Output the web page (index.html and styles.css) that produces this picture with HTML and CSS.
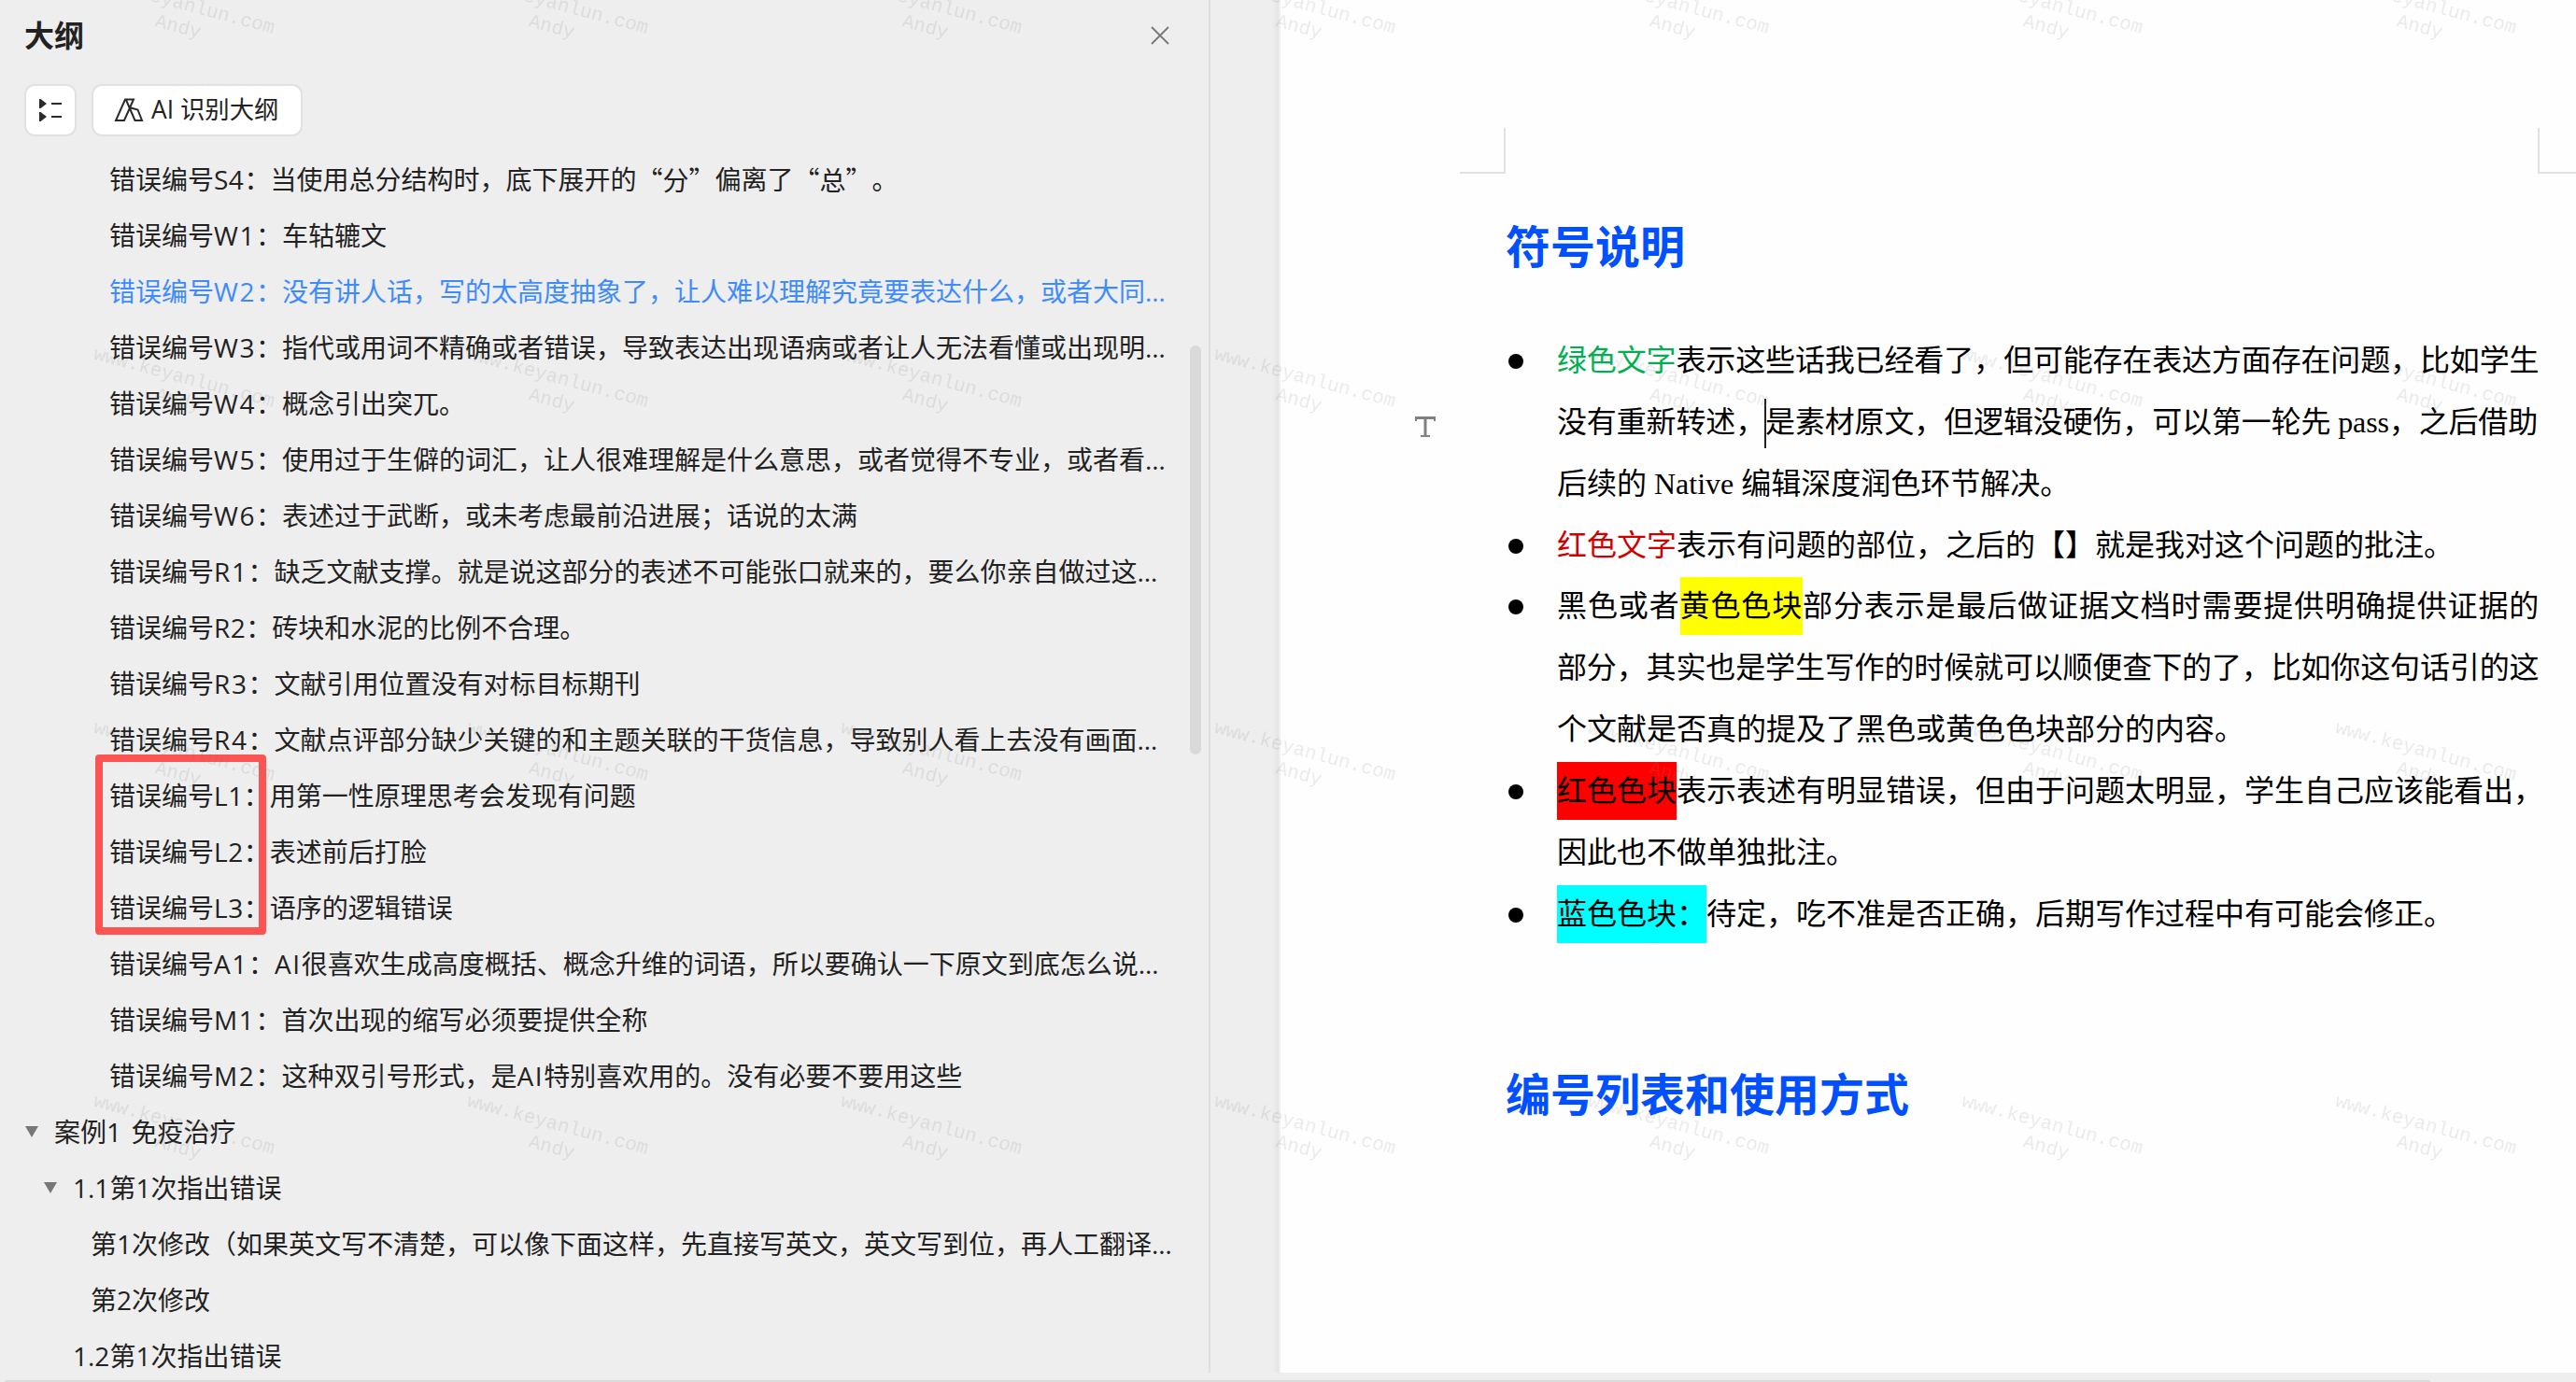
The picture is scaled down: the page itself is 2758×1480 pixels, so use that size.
FILE: index.html
```html
<!DOCTYPE html>
<html lang="zh-CN">
<head>
    <meta charset="UTF-8">
    <title>大纲</title>
    <link rel="stylesheet" href="styles.css">
</head>
<body>

    <div class="main-content">
        <div class="left-panel">
            <div class="panel-header">
                <h2>大纲</h2>
                <svg class="close" width="20" height="20" viewBox="0 0 20 20">
                    <path d="M1 1L19 19M19 1L1 19"/>
                </svg>
            </div>

            <div class="toolbar">
                <div class="btn btn-list">
                    <svg width="26" height="26" viewBox="0 0 26 26">
                        <path class="fill" d="M1 1h1.500L9 6L2.500 11H1zM1 15h1.500L9 20L2.500 25H1z"/>
                        <path class="line" d="M14 6h11M14 20h11"/>
                    </svg>
                </div>
                <div class="btn btn-ai">
                    <svg width="32" height="26" viewBox="0 0 32 26">
                        <path class="line" d="M12 1.500h9L11 24H2zM13 2L22.500 24H30L25.500 12.500L18 10.500"/>
                    </svg>
                    <span>AI 识别大纲</span>
                </div>
            </div>

            <ul class="outline">
                <li class="level-4">错误编号<span class="code-s">S4</span>：当使用总分结构时，底下展开的<span class="cjk">“分”</span>偏离了<span class="cjk">“总”</span>。</li>
                <li class="level-4">错误编号<span class="code">W1</span>：车轱辘文</li>
                <li class="level-4 active">错误编号<span class="code">W2</span>：没有讲人话，写的太高度抽象了，让人难以理解究竟要表达什么，或者大同…</li>
                <li class="level-4">错误编号<span class="code">W3</span>：指代或用词不精确或者错误，导致表达出现语病或者让人无法看懂或出现明…</li>
                <li class="level-4">错误编号<span class="code">W4</span>：概念引出突兀。</li>
                <li class="level-4">错误编号<span class="code">W5</span>：使用过于生僻的词汇，让人很难理解是什么意思，或者觉得不专业，或者看…</li>
                <li class="level-4">错误编号<span class="code">W6</span>：表述过于武断，或未考虑最前沿进展；话说的太满</li>
                <li class="level-4">错误编号<span class="code">R1</span>：缺乏文献支撑。就是说这部分的表述不可能张口就来的，要么你亲自做过这…</li>
                <li class="level-4">错误编号<span class="code-s">R2</span>：砖块和水泥的比例不合理。</li>
                <li class="level-4">错误编号<span class="code">R3</span>：文献引用位置没有对标目标期刊</li>
                <li class="level-4">错误编号<span class="code">R4</span>：文献点评部分缺少关键的和主题关联的干货信息，导致别人看上去没有画面…</li>
                <li class="level-4">错误编号<span class="code-s">L1</span>：用第一性原理思考会发现有问题</li>
                <li class="level-4">错误编号<span class="code-s">L2</span>：表述前后打脸</li>
                <li class="level-4">错误编号<span class="code-s">L3</span>：语序的逻辑错误</li>
                <li class="level-4">错误编号<span class="code">A1</span>：<span class="code">AI</span>很喜欢生成高度概括、概念升维的词语，所以要确认一下原文到底怎么说…</li>
                <li class="level-4">错误编号<span class="code">M1</span>：首次出现的缩写必须要提供全称</li>
                <li class="level-4">错误编号<span class="code">M2</span>：这种双引号形式，是<span class="code">AI</span>特别喜欢用的。没有必要不要用这些</li>
                <li class="level-1"><i class="arrow"></i>案例<span class="code">1 </span>免疫治疗</li>
                <li class="level-2"><i class="arrow"></i>1.1第1次指出错误</li>
                <li class="level-3">第1次修改（如果英文写不清楚，可以像下面这样，先直接写英文，英文写到位，再人工翻译…</li>
                <li class="level-3">第2次修改</li>
                <li class="level-2"><i class="arrow hidden"></i>1.2第1次指出错误</li>
            </ul>

            <div class="scroll-thumb"></div>
            <div class="red-frame"></div>
        </div>

        <div class="gutter"></div>

        <div class="page">
            <div class="crop-marks">
                <div class="crop-left"></div>
                <div class="crop-right"></div>
            </div>

            <div class="doc">
                <h1>符号说明</h1>
                <ul class="doc-list">
                    <li>
                        <div class="row tight"><span class="green">绿色文字</span>表示这些话我已经看了，但可能存在表达方面存在问题，比如学生</div>
                        <div class="row tight">没有重新转述，<i class="caret"></i>是素材原文，但逻辑没硬伤，可以第一轮先 pass，之后借助</div>
                        <div class="row">后续的 Native 编辑深度润色环节解决。</div>
                    </li>
                    <li>
                        <div class="row"><span class="red">红色文字</span>表示有问题的部位，之后的【】就是我对这个问题的批注。</div>
                    </li>
                    <li>
                        <div class="row loose">黑色或者<span class="mark yellow">黄色色块</span>部分表示是最后做证据文档时需要提供明确提供证据的</div>
                        <div class="row tight">部分，其实也是学生写作的时候就可以顺便查下的了，比如你这句话引的这</div>
                        <div class="row">个文献是否真的提及了黑色或黄色色块部分的内容。</div>
                    </li>
                    <li>
                        <div class="row"><span class="mark crimson">红色色块</span>表示表述有明显错误，但由于问题太明显，学生自己应该能看出，</div>
                        <div class="row">因此也不做单独批注。</div>
                    </li>
                    <li>
                        <div class="row"><span class="mark cyan">蓝色色块：</span>待定，吃不准是否正确，后期写作过程中有可能会修正。</div>
                    </li>
                </ul>
                <h1>编号列表和使用方式</h1>
            </div>

            <svg class="text-tool" width="22" height="22" viewBox="0 0 22 22">
                <path class="thick" d="M0 1.500H22M11 2V20"/>
                <path d="M1 2V5M21 2V5M6 21H16"/>
            </svg>
        </div>
    </div>

    <div class="bottom-bar">
        <div class="bottom-thumb"></div>
    </div>

    <div class="watermark" id="watermark"></div>

    <script>
        // 7 列 x 4 行水印
        const watermark = document.getElementById('watermark');
        for (let i = 0; i < 28; i++) {
            const item = document.createElement('div');
            item.className = 'watermark-item';
            item.innerHTML = '<p>www.keyanlun.com<br>Andy</p>';
            watermark.appendChild(item);
        }
    </script>
</body>
</html>
```
FILE: styles.css
```css
* {
    box-sizing: border-box;
}
body {
    position: relative;
    width: 2758px;
    height: 1480px;
    margin: 0;
    overflow: hidden;
    background-color: #eeeeee;
    color: #222;
    font-family: "Open Sans", "Noto Sans CJK SC", sans-serif;
    text-spacing-trim: space-all;
    text-autospace: no-autospace;
}
h1, h2, ul, p {
    margin: 0;
    padding: 0;
}
ul {
    list-style: none;
}
svg {
    display: block;
    fill: none;
}
.main-content {
    display: flex;
    height: 1470px;
}

/* 左侧大纲 */
.left-panel {
    position: relative;
    width: 1296px;
    height: 1470px;
    flex: none;
    border-right: 2px solid #dfdfdf;
    overflow: hidden;
}
.panel-header {
    display: flex;
    justify-content: space-between;
    align-items: center;
    height: 76px;
    padding: 0 42px 0 26px;
}
.panel-header h2 {
    font-size: 32px;
    line-height: 76px;
}
.close {
    stroke: #777;
    stroke-width: 1.8;
}
.toolbar {
    display: flex;
    gap: 16px;
    padding: 14px 26px 0;
}
.btn {
    display: flex;
    align-items: center;
    height: 56px;
    border: 2px solid #e1e1e1;
    border-radius: 11px;
    background-color: #fff;
    font-size: 26.4px;
}
.btn-list {
    width: 56px;
    justify-content: center;
}
.btn-ai {
    width: 226px;
    gap: 8px;
    padding-left: 22px;
    line-height: 50px;
    white-space: nowrap;
}
.btn-ai span {
    padding-bottom: 2px;
}
.btn .line {
    stroke: #2a2a2a;
    stroke-width: 2;
}
.btn .fill {
    fill: #2a2a2a;
}
.outline {
    padding-top: 16px;
}
.outline li {
    display: flex;
    align-items: center;
    height: 60px;
    font-size: 28px;
    line-height: 60px;
    white-space: pre;
}
.outline .active {
    color: #3d8bff;
}
.code {
    letter-spacing: 1.6px;
}
.code-s {
    letter-spacing: 0.5px;
}
.cjk {
    font-family: "Noto Sans CJK SC", sans-serif;
}
.level-1 {
    padding-left: 27px;
}
.level-2 {
    padding-left: 47px;
}
.level-3 {
    padding-left: 97px;
}
.level-4 {
    padding-left: 117px;
}
.arrow {
    width: 14px;
    height: 12px;
    margin-right: 17px;
    background-color: #777;
    clip-path: polygon(0 0, 100% 0, 50% 100%);
}
.hidden {
    visibility: hidden;
}
.scroll-thumb {
    position: absolute;
    left: 1274px;
    top: 370px;
    width: 12px;
    height: 438px;
    border-radius: 6px;
    background-color: #d9d9d9;
}
.red-frame {
    position: absolute;
    left: 102px;
    top: 808px;
    width: 183px;
    height: 193px;
    border: 8px solid #fc5353;
    border-radius: 4px;
}

/* 文档页面 */
.gutter {
    width: 75px;
    flex: none;
    background: linear-gradient(to right, #eeeeee 66px, #e4e4e4 73px, #efefef 73px);
}
.page {
    position: relative;
    flex: 1;
    background-color: #fefefe;
    color: #000;
    font-family: "Liberation Serif", "Noto Sans CJK SC", serif;
}
.crop-marks {
    display: flex;
    justify-content: space-between;
    padding: 137px 0 0 192px;
}
.crop-left, .crop-right {
    height: 49px;
    border-bottom: 2px solid #e1e1e1;
}
.crop-left {
    width: 49px;
    border-right: 2px solid #e1e1e1;
}
.crop-right {
    width: 41px;
    border-left: 2px solid #e1e1e1;
}
.doc {
    padding: 40px 0 0 241px;
}
.doc h1 {
    height: 80px;
    color: #0050ff;
    font-size: 48px;
    line-height: 80px;
}
.doc-list {
    padding: 48px 0 122px;
}
.doc-list li {
    position: relative;
    padding-left: 55px;
}
.doc-list li::before {
    content: "";
    position: absolute;
    left: 3px;
    top: 25px;
    width: 16px;
    height: 16px;
    border-radius: 50%;
    background-color: #000;
}
.row {
    height: 65.85px;
    font-size: 32px;
    line-height: 65.85px;
    white-space: nowrap;
}
.tight {
    letter-spacing: -0.14px;
}
.loose {
    letter-spacing: 0.88px;
}
.green {
    color: #00b050;
}
.red {
    color: #d00000;
}
.mark {
    display: inline-block;
    height: 62px;
    line-height: 62px;
    vertical-align: baseline;
}
.yellow {
    background-color: #ffff00;
}
.crimson {
    background-color: #ff0000;
}
.cyan {
    background-color: #00ffff;
}
.caret {
    display: inline-block;
    width: 2px;
    height: 53px;
    margin: 0 -1px;
    background-color: #222;
    vertical-align: -17px;
}
.text-tool {
    position: absolute;
    left: 144px;
    top: 446px;
    stroke: #808080;
    stroke-width: 2;
}
.text-tool .thick {
    stroke-width: 3;
}

/* 底部滚动条 */
.bottom-bar {
    height: 10px;
    padding: 8px 0 0 4px;
}
.bottom-thumb {
    width: 2599px;
    height: 8px;
    border-radius: 4px;
    background-color: #d9d9d9;
}

/* 水印 */
.watermark {
    position: absolute;
    left: -6px;
    top: -183px;
    display: grid;
    grid-template-columns: repeat(7, 400px);
    grid-auto-rows: 400px;
    pointer-events: none;
}
.watermark-item {
    display: flex;
    align-items: center;
    justify-content: center;
}
.watermark p {
    color: rgba(128, 128, 128, 0.17);
    font-family: "Liberation Mono", monospace;
    font-size: 20.8px;
    line-height: 25px;
    text-align: center;
    transform: rotate(15deg);
}
```
